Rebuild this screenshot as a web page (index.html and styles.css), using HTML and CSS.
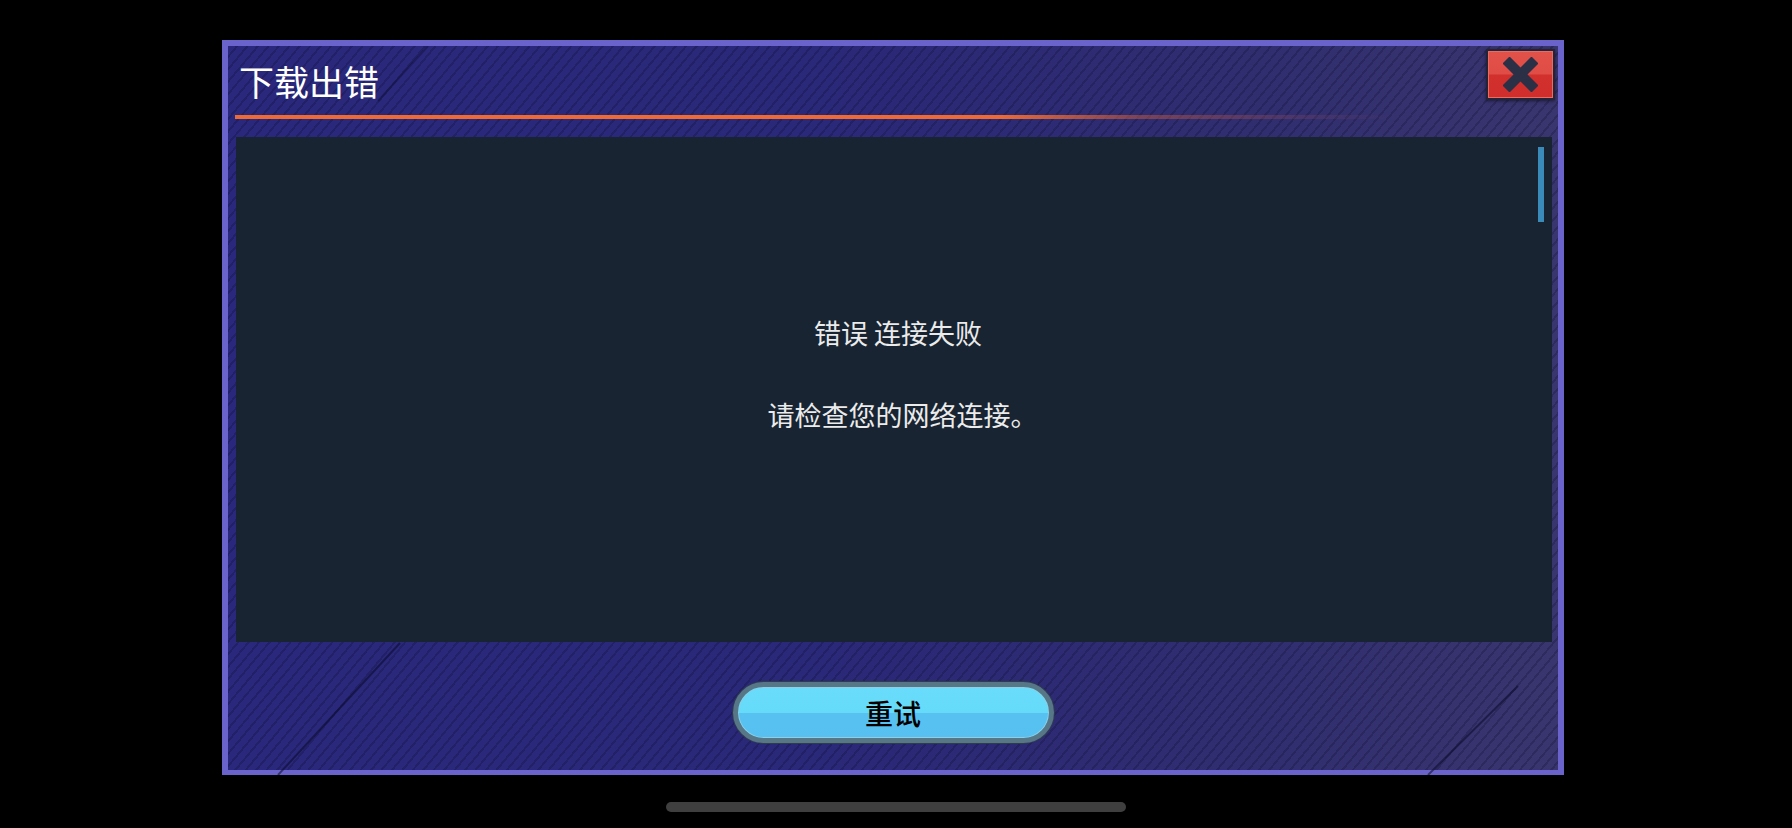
FILE: index.html
```html
<!DOCTYPE html>
<html lang="zh">
<head>
<meta charset="utf-8">
<title>下载出错</title>
<link rel="stylesheet" href="styles.css">
</head>
<body>
<div class="screen">
  <div class="dialog">
    <svg class="deco" width="1330" height="729" viewBox="0 0 1330 729">
      <line x1="200" y1="0" x2="150" y2="55" stroke="rgba(10,10,40,0.35)" stroke-width="2"/>
      <line x1="172" y1="597" x2="50" y2="729" stroke="rgba(10,10,40,0.55)" stroke-width="2"/>
      <line x1="1290" y1="640" x2="1200" y2="729" stroke="rgba(10,10,40,0.55)" stroke-width="2"/>
    </svg>
    <div class="header">
      <h1 class="title">下载出错</h1>
      <div class="rule"></div>
    </div>
    <button class="close" aria-label="关闭">
      <svg width="35" height="35" viewBox="0 0 35 35">
        <line x1="3" y1="3" x2="32" y2="32" stroke="#2b3047" stroke-width="10"/>
        <line x1="32" y1="3" x2="3" y2="32" stroke="#2b3047" stroke-width="10"/>
      </svg>
    </button>
    <div class="panel">
      <div class="scrollbar"></div>
      <p class="msg">错误 连接失败</p>
      <p class="msg msg2">请检查您的网络连接。</p>
    </div>
    <div class="footer">
      <button class="retry">重试</button>
    </div>
  </div>
  <div class="home"></div>
</div>
</body>
</html>
```
FILE: styles.css
```css
html, body {
  margin: 0;
  padding: 0;
  background: #000;
}
body {
  width: 1792px;
  height: 828px;
  overflow: hidden;
  font-family: "Noto Sans CJK SC", "Noto Sans", sans-serif;
}
.screen {
  width: 1792px;
  height: 828px;
  padding-top: 40px;
  box-sizing: border-box;
}
.dialog {
  position: relative;
  margin-left: 222px;
  width: 1342px;
  height: 735px;
  box-sizing: border-box;
  border: 6px solid #6b63cc;
  border-bottom-width: 5px;
  display: flex;
  flex-direction: column;
  background:
    repeating-linear-gradient(130deg, rgba(255,255,255,0) 0 6px, rgba(10,10,40,0.24) 6px 8px),
    linear-gradient(90deg, #29287c 0%, #2a2878 45%, #302d70 75%, #39356e 100%);
}
.deco {
  position: absolute;
  left: 0;
  top: 0;
  pointer-events: none;
}
.header {
  position: relative;
  padding: 17px 0 0 7px;
  height: 91px;
  box-sizing: border-box;
}
.title {
  margin: 0 0 0 4px;
  font-size: 35px;
  line-height: 36px;
  font-weight: 400;
  color: #fff;
}
.rule {
  margin-top: 16px;
  width: 1160px;
  height: 4px;
  background: linear-gradient(90deg, #ee6a32 0%, #ee6a32 66%, rgba(200,90,60,0.5) 78%, rgba(170,80,90,0.2) 92%, rgba(150,70,100,0) 100%);
}
.close {
  position: absolute;
  top: 3px;
  right: 3px;
  width: 69px;
  height: 51px;
  padding: 0;
  box-sizing: border-box;
  border: 2px solid #22243a;
  background: linear-gradient(180deg, #e25249 0%, #e04c46 48%, #d1302d 52%, #cf2e2c 100%);
  box-shadow: inset 0 0 0 1px #ec6a60, 0 1px 3px rgba(0,0,0,0.5);
  display: flex;
  align-items: center;
  justify-content: center;
}
.panel {
  position: relative;
  margin-left: 8px;
  margin-right: 6px;
  height: 505px;
  background: #182431;
  padding-top: 177px;
  padding-left: 8px;
  box-sizing: border-box;
  text-align: center;
  color: #ebebeb;
}
.scrollbar {
  position: absolute;
  top: 10px;
  right: 8px;
  width: 6px;
  height: 75px;
  background: #3a8bb9;
}
.msg {
  margin: 0;
  font-size: 27px;
  line-height: 37px;
  font-weight: 400;
}
.msg2 {
  margin-top: 45px;
  padding-left: 9px;
}
.footer {
  flex: 1;
  display: flex;
  justify-content: center;
  padding-top: 40px;
}
.retry {
  width: 321px;
  height: 61px;
  box-sizing: border-box;
  border-radius: 31px;
  border: 5px solid #577686;
  box-shadow: 0 0 0 1px #2e3d4c, inset 0 0 0 1px #8ccfe6;
  background: linear-gradient(180deg, #68dcfa 0%, #66daf9 50%, #57c2f2 51%, #57c0f1 100%);
  font-family: "Noto Sans CJK SC", "Noto Sans", sans-serif;
  font-size: 28px;
  font-weight: 500;
  color: #000;
  padding: 0;
  line-height: 1;
}
.home {
  margin-top: 27px;
  margin-left: 666px;
  width: 460px;
  height: 10px;
  border-radius: 5px;
  background: #3f3f3f;
}
```
